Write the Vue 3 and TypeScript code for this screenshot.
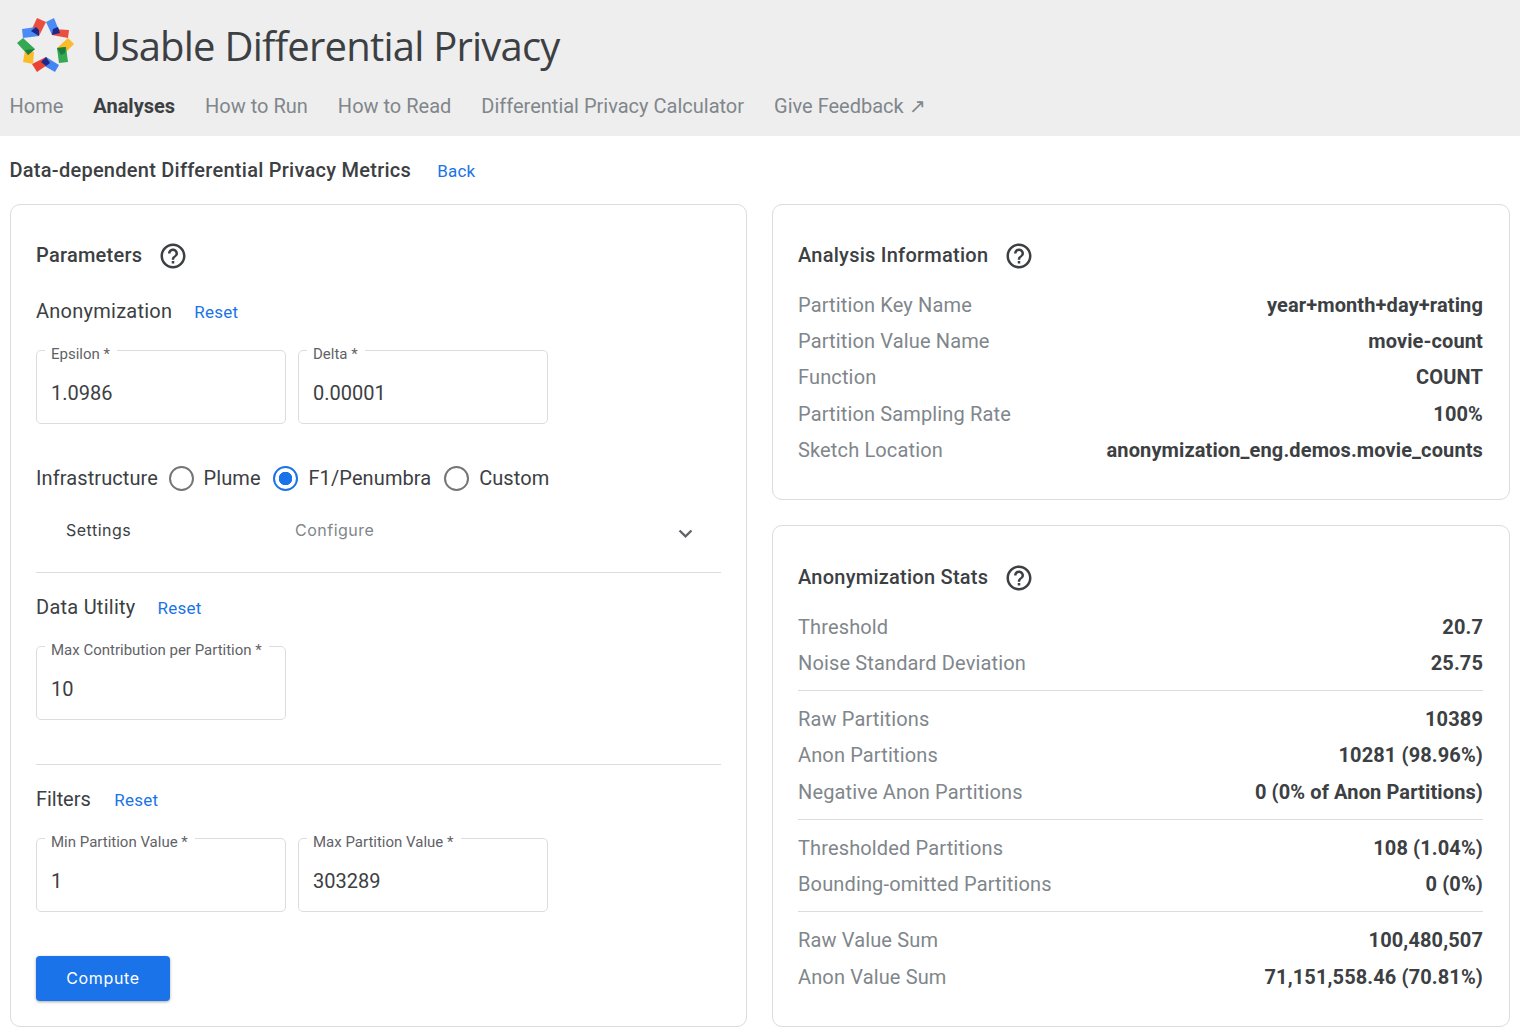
<script setup lang="ts">
const nav = ['Home', 'Analyses', 'How to Run', 'How to Read', 'Differential Privacy Calculator', 'Give Feedback ↗']

const analysisInfo = [
  ['Partition Key Name', 'year+month+day+rating'],
  ['Partition Value Name', 'movie-count'],
  ['Function', 'COUNT'],
  ['Partition Sampling Rate', '100%'],
  ['Sketch Location', 'anonymization_eng.demos.movie_counts'],
]

const statGroups = [
  [
    ['Threshold', '20.7'],
    ['Noise Standard Deviation', '25.75'],
  ],
  [
    ['Raw Partitions', '10389'],
    ['Anon Partitions', '10281 (98.96%)'],
    ['Negative Anon Partitions', '0 (0% of Anon Partitions)'],
  ],
  [
    ['Thresholded Partitions', '108 (1.04%)'],
    ['Bounding-omitted Partitions', '0 (0%)'],
  ],
  [
    ['Raw Value Sum', '100,480,507'],
    ['Anon Value Sum', '71,151,558.46 (70.81%)'],
  ],
]

const radios = [
  { label: 'Plume', on: false },
  { label: 'F1/Penumbra', on: true },
  { label: 'Custom', on: false },
]
</script>

<template>
  <div class="page">
    <header class="header">
      <div class="brand">
        <svg class="logo" width="58" height="56" viewBox="17 17 58 56">
          <polygon points="37,18 46,22 39,36 31,31" fill="#ea4335" opacity=".95" />
          <polygon points="22,29 36,27 39,36 23,38" fill="#4285f4" opacity=".95" />
          <polygon points="31,31 36,27 39,30 39,36" fill="#1a2a8c" />
          <polygon points="46,22 54,18 60,33 52,35" fill="#4285f4" opacity=".95" />
          <polygon points="53,29 69,30 68,38 52,35" fill="#ea4335" opacity=".95" />
          <polygon points="52,35 53,29 58,27 60,33" fill="#1a2a8c" />
          <polygon points="57,48 68,38 74,44 65,53" fill="#fbbc2c" />
          <polygon points="57,48 66,47 68,62 59,63" fill="#34a853" />
          <polygon points="57,48 66,47 65,53 61,55" fill="#1e7d3a" />
          <polygon points="46,57 59,65 55,72 41,64" fill="#4285f4" />
          <polygon points="32,64 46,57 50,63 37,72" fill="#ea4335" />
          <polygon points="41,62 46,57 50,63 46,66" fill="#1a2a8c" />
          <polygon points="25,50 34,52 33,64 23,62" fill="#fbbc2c" />
          <polygon points="17,43 23,38 35,49 28,55" fill="#34a853" />
          <polygon points="25,50 35,49 28,55" fill="#1e7d3a" />
        </svg>
        <h1 class="title">Usable Differential Privacy</h1>
      </div>
      <nav class="nav">
        <a v-for="item in nav" :key="item" class="nav-link" :class="{ active: item === 'Analyses' }">{{ item }}</a>
      </nav>
    </header>

    <div class="sub-head">
      <h2 class="page-title">Data-dependent Differential Privacy Metrics</h2>
      <a class="link">Back</a>
    </div>

    <main class="columns">
      <section class="card params">
        <div class="card-title">
          <span>Parameters</span>
          <svg class="help" width="30" height="30" viewBox="0 0 24 24"><path d="M11 18h2v-2h-2v2zm1-16C6.48 2 2 6.48 2 12s4.48 10 10 10 10-4.48 10-10S17.52 2 12 2zm0 18c-4.41 0-8-3.59-8-8s3.59-8 8-8 8 3.59 8 8-3.59 8-8 8zm0-14c-2.21 0-4 1.79-4 4h2c0-1.1.9-2 2-2s2 .9 2 2c0 2-3 1.75-3 5h2c0-2.25 3-2.5 3-5 0-2.21-1.79-4-4-4z" /></svg>
        </div>

        <div class="group-head">
          <span class="group-title">Anonymization</span>
          <a class="link">Reset</a>
        </div>
        <div class="fields">
          <fieldset class="field"><legend>Epsilon *</legend><span class="value">1.0986</span></fieldset>
          <fieldset class="field"><legend>Delta *</legend><span class="value">0.00001</span></fieldset>
        </div>

        <div class="infra">
          <span class="infra-label">Infrastructure</span>
          <label v-for="r in radios" :key="r.label" class="radio">
            <span class="circle" :class="{ on: r.on }"></span>
            <span>{{ r.label }}</span>
          </label>
        </div>

        <div class="settings">
          <span class="settings-name">Settings</span>
          <span class="settings-desc">Configure</span>
          <svg class="chevron" width="27" height="27" viewBox="0 0 24 24"><path d="M16.59 8.59 12 13.17 7.41 8.59 6 10l6 6 6-6z" /></svg>
        </div>

        <div class="group-head after-rule">
          <span class="group-title">Data Utility</span>
          <a class="link">Reset</a>
        </div>
        <div class="fields">
          <fieldset class="field"><legend>Max Contribution per Partition *</legend><span class="value">10</span></fieldset>
        </div>

        <div class="group-head ruled">
          <span class="group-title">Filters</span>
          <a class="link">Reset</a>
        </div>
        <div class="fields">
          <fieldset class="field"><legend>Min Partition Value *</legend><span class="value">1</span></fieldset>
          <fieldset class="field"><legend>Max Partition Value *</legend><span class="value">303289</span></fieldset>
        </div>

        <button class="compute" type="button">Compute</button>
      </section>

      <div class="right">
        <section class="card info">
          <div class="card-title">
            <span>Analysis Information</span>
            <svg class="help" width="30" height="30" viewBox="0 0 24 24"><path d="M11 18h2v-2h-2v2zm1-16C6.48 2 2 6.48 2 12s4.48 10 10 10 10-4.48 10-10S17.52 2 12 2zm0 18c-4.41 0-8-3.59-8-8s3.59-8 8-8 8 3.59 8 8-3.59 8-8 8zm0-14c-2.21 0-4 1.79-4 4h2c0-1.1.9-2 2-2s2 .9 2 2c0 2-3 1.75-3 5h2c0-2.25 3-2.5 3-5 0-2.21-1.79-4-4-4z" /></svg>
          </div>
          <div class="rows">
            <div v-for="row in analysisInfo" :key="row[0]" class="row">
              <span class="key">{{ row[0] }}</span>
              <span class="val">{{ row[1] }}</span>
            </div>
          </div>
        </section>

        <section class="card stats">
          <div class="card-title">
            <span>Anonymization Stats</span>
            <svg class="help" width="30" height="30" viewBox="0 0 24 24"><path d="M11 18h2v-2h-2v2zm1-16C6.48 2 2 6.48 2 12s4.48 10 10 10 10-4.48 10-10S17.52 2 12 2zm0 18c-4.41 0-8-3.59-8-8s3.59-8 8-8 8 3.59 8 8-3.59 8-8 8zm0-14c-2.21 0-4 1.79-4 4h2c0-1.1.9-2 2-2s2 .9 2 2c0 2-3 1.75-3 5h2c0-2.25 3-2.5 3-5 0-2.21-1.79-4-4-4z" /></svg>
          </div>
          <div v-for="(group, i) in statGroups" :key="i" class="rows stat-group">
            <div v-for="row in group" :key="row[0]" class="row">
              <span class="key">{{ row[0] }}</span>
              <span class="val">{{ row[1] }}</span>
            </div>
          </div>
        </section>
      </div>
    </main>
  </div>
</template>

<style>
html, body { margin: 0; background: #fff; }
</style>

<style scoped>
.page { font-family: Roboto, sans-serif; color: #3c4043; height: 1035px; overflow: hidden; }
.header { background: #eee; height: 136px; box-sizing: border-box; padding: 17px 10px 0 9.5px; }
.brand { display: flex; align-items: center; gap: 17px; padding-left: 7.5px; height: 56px; }
.logo { flex-shrink: 0; }
.title { margin: 0; font-family: "Open Sans", sans-serif; font-size: 40px; font-weight: 400; color: #3c4043; letter-spacing: -0.78px; }
.nav { display: flex; gap: 30px; margin-top: 21px; font-size: 20px; line-height: 24px; }
.nav-link { color: #80868b; }
.nav-link.active { color: #3c4043; font-weight: 700; }

.sub-head { display: flex; align-items: center; gap: 26px; padding: 22px 10px 0 9.5px; height: 24px; }
.page-title { margin: 0; font-size: 20px; font-weight: 500; letter-spacing: 0.26px; }
.link { color: #1a73e8; font-size: 17px; letter-spacing: 0.25px; margin-top: 2px; }

.columns { display: grid; grid-template-columns: 737px 738px; gap: 25px; padding: 22px 10px 0; }
.card { border: 1px solid #dadce0; border-radius: 10px; padding: 26px 25px; box-sizing: border-box; background: #fff; }
.params { height: 823px; }
.right { display: flex; flex-direction: column; gap: 25px; }
.info { height: 296px; padding-right: 26px; }
.stats { height: 502px; padding-right: 26px; }

.card-title { display: flex; align-items: center; gap: 15.5px; height: 28px; margin-top: 10px; font-size: 20px; font-weight: 500; letter-spacing: 0.25px; }
.stats .card-title { margin-top: 11px; }
.help { fill: #3c4043; flex-shrink: 0; margin-top: 1px; }

.group-head { display: flex; align-items: center; gap: 22px; height: 28px; margin-top: 28px; letter-spacing: 0.25px; }
.group-head.after-rule { margin-top: 20px; }
.group-head.ruled { border-top: 1px solid #dadce0; margin-top: 44px; padding-top: 20px; gap: 23.5px; letter-spacing: -0.05px; }
.group-title { font-size: 20px; }
.fields { display: flex; gap: 12px; margin-top: 18px; }
.field { width: 250px; height: 81px; box-sizing: border-box; margin: 0; padding: 0 14px; border: 1px solid #dadce0; border-radius: 5px; }
.field legend { padding: 7px 7px 0 6px; margin-left: -6px; font-size: 15px; line-height: 8px; color: #5f6368; }
.value { display: block; padding-top: 20.5px; font-size: 20px; line-height: 28px; color: #3c4043; }

.infra { display: flex; align-items: center; height: 28px; margin-top: 40px; font-size: 20px; letter-spacing: 0.1px; }
.infra-label { margin-right: 10.5px; }
.radio { display: flex; align-items: center; gap: 10px; margin-right: 12.8px; }
.circle { width: 25px; height: 25px; box-sizing: border-box; border: 2px solid #757575; border-radius: 50%; display: block; }
.circle.on { border-color: #1a73e8; background: radial-gradient(circle, #1a73e8 0 6.5px, transparent 7px); }

.settings { display: flex; align-items: center; height: 48px; margin-top: 14px; padding: 0 22px 18px 30px; font-family: Inter, sans-serif; font-size: 16px; letter-spacing: 0.5px; border-bottom: 1px solid #dadce0; }
.settings-name { width: 229px; color: #3c4043; }
.settings-desc { flex: 1; color: #80868b; }
.chevron { margin-top: 6px; fill: #5f6368; }

.compute { display: block; width: 134px; height: 45px; margin-top: 44px; padding: 0 0 2px; border: 0; border-radius: 4px; background: #1a73e8; color: #fff; font-family: Inter, sans-serif; font-size: 16px; letter-spacing: 0.65px; box-shadow: 0 1px 3px rgba(0, 0, 0, .35); }

.rows { margin-top: 17.7px; }
.info .rows { margin-top: 17.8px; }
.row { display: flex; justify-content: space-between; height: 36.3px; line-height: 36.3px; font-size: 20px; }
.key { color: #80868b; letter-spacing: 0.14px; }
.val { color: #3c4043; font-weight: 700; letter-spacing: 0.12px; }
.stat-group + .stat-group { border-top: 1px solid #dadce0; margin-top: 8.9px; padding-top: 10px; }
</style>
